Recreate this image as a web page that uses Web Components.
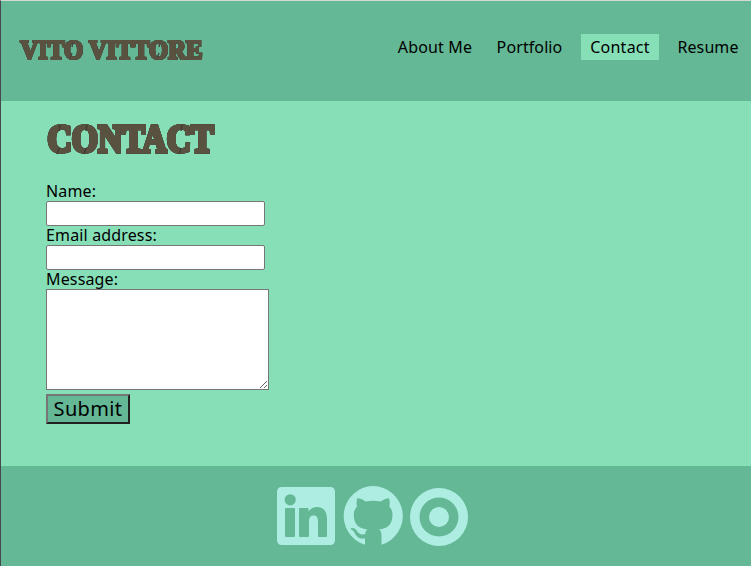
<!DOCTYPE html>
<html lang="en"><head><meta charset="utf-8"><title>Vito Vittore</title>
<style>body{margin:0;background:#fff;height:569px;overflow:hidden}</style></head><body>
<portfolio-page></portfolio-page>
<script>
const define=(name,html,setup)=>customElements.define(name,class extends HTMLElement{
  connectedCallback(){ if(this.shadowRoot)return;
    const r=this.attachShadow({mode:'open'}); r.innerHTML=html; if(setup)setup(this,r); }
});
define('stencil-title',`<style>:host{display:block}svg{display:block;overflow:visible}
text{font-family:"Liberation Serif",serif;font-weight:700;fill:#5a5240;stroke:#5a5240;filter:drop-shadow(.5px .6px 0 #4b443b) drop-shadow(.5px .7px 0 #413b34)}
path{fill:none;stroke-width:1.4}</style><svg><text></text><path/></svg>`,(h,r)=>{
  const a=n=>h.getAttribute(n),s=r.querySelector('svg'),t=r.querySelector('text'),p=r.querySelector('path');
  s.setAttribute('width',a('w'));s.setAttribute('height',a('h'));
  t.textContent=a('text');t.setAttribute('x',1.5);t.setAttribute('y',a('base'));t.setAttribute('font-size',a('size'));
  t.setAttribute('stroke-width',a('weight'));
  t.setAttribute('textLength',a('w')-4);t.setAttribute('lengthAdjust','spacingAndGlyphs');
  p.setAttribute('d',a('cuts'));p.setAttribute('stroke',a('cut-color'));
});
define('nav-link',`<style>:host{display:block;box-sizing:border-box;height:26px;text-align:center;line-height:26px;white-space:nowrap}
:host([active]){background:#87dfb7}a{color:inherit;text-decoration:none}</style><a><slot></slot></a>`);
define('site-header',`<style>:host{display:flex;justify-content:space-between;box-sizing:border-box;height:100px;background:#64b896;padding:33px 0 0 18px}
stencil-title{margin-top:4px}nav{display:flex;gap:6px}
nav-link{font-size:16px}</style>
<stencil-title text="VITO VITTORE" w="186" h="24" base="20.5" size="27" weight="2.2" cut-color="#4a4440" cuts="M54 4l-1 5M53 15l-2 5M141 4l-1 5M140 15l-2 5"></stencil-title>
<nav><nav-link style="width:86px;letter-spacing:.15px">About Me</nav-link><nav-link style="width:91px;letter-spacing:.1px">Portfolio</nav-link><nav-link active style="width:78px;letter-spacing:.25px">Contact</nav-link><nav-link style="width:86px;letter-spacing:.1px">Resume</nav-link></nav>`);
define('form-field',`<style>:host{display:block}label{display:block;height:19px;line-height:19px;font-size:16px;letter-spacing:.15px}
input,textarea{display:block;box-sizing:border-box;margin:0;border:1px solid #767676;border-radius:2px;background:#fff;font:16px "Noto Sans",sans-serif}
input{width:219px;height:25px}textarea{width:223px;height:101px;border-radius:0}</style><label for="f"><slot></slot></label>`,(h,r)=>{
  const e=document.createElement(h.hasAttribute('multiline')?'textarea':'input');e.id='f';r.append(e);
});
define('contact-form',`<style>:host{display:block;box-sizing:border-box;height:365px;background:#87dfb7;padding:20px 45px 0}
form{margin-top:24px}button{display:block;box-sizing:border-box;width:84px;height:30px;margin:4px 0 0;padding:0;border:2px solid;border-color:#767676 #212121 #212121 #767676;background:#64b896;color:#000;font:20px/26px "Noto Sans",sans-serif;letter-spacing:.35px}</style>
<stencil-title text="CONTACT" w="170" h="37" base="31" size="40" weight="3.6" cut-color="#403935" cuts="M14 4l-1 6M13 27l-2 6M41 4l-1 6M40 27l-2 6M136 4l-1 6M135 27l-2 6"></stencil-title>
<form><form-field>Name:</form-field><form-field>Email address:</form-field><form-field multiline>Message:</form-field><button type="button">Submit</button></form>`);
define('social-icon',`<style>:host{display:block}svg{display:block;fill:#aeeee2}</style><svg fill-rule="evenodd"><path/></svg>`,(h,r)=>{
  const s=r.querySelector('svg'),v=h.getAttribute('size').split(' ');
  s.setAttribute('width',v[0]);s.setAttribute('height',v[1]);s.setAttribute('viewBox',`0 0 ${v[0]} ${v[1]}`);
  r.querySelector('path').setAttribute('d',h.getAttribute('shape'));
});
define('site-footer',`<style>:host{display:flex;box-sizing:border-box;height:100px;padding:20px 0 0 276px;background:#64b896;gap:7.5px}</style>
<social-icon style="margin-top:1px" size="58 58" shape="M5 0H53Q58 0 58 5V53Q58 58 53 58H5Q0 58 0 53V5Q0 0 5 0ZM13.2 7.2a5.6 5.6 0 1 0 0 11.2a5.6 5.6 0 1 0 0-11.2ZM8 22Q8 21 9 21H17Q18 21 18 22V49Q18 50 17 50H9Q8 50 8 49ZM22 22Q22 21 23 21H30.5Q31.5 21 31.5 22V24.5C33.5 21.5 36.5 20 40 20C47 20 50 25 50 32V49Q50 50 49 50H42Q41 50 41 49V35C41 31 40 28.5 36.8 28.5C33 28.5 32 31 32 35V49Q32 50 31 50H23Q22 50 22 49Z"></social-icon>
<social-icon size="60 60" shape="M30 0a30 30 0 0 1 8.5 58.7V49C38.5 46 37.5 44.5 36 43.5C44 42.5 49.5 39.5 49.5 28.5C49.5 25 48.3 22.6 46.3 20.5C47 17.5 47 15 46 12.3C43 12.3 40.5 13.6 37.8 15.5C32.8 14.5 27.5 14.5 22.5 15.5C19.5 13.5 17 12.3 14.3 12.3C13.3 15 13.3 17.5 14 20.5C12 22.6 10.8 25 10.8 28.5C10.8 39.5 16.5 42.5 24.5 43.5C23 44.5 22.3 46 22.2 48C18.5 49 15.8 48 14 45C12 42 10 41.8 8 42.2C7.3 43 8.5 43.6 9.5 44.3C12.5 47 12 50.3 17 52.2C18.5 52.7 20 52.7 22 52.3V58.7A30 30 0 0 1 30 0Z"></social-icon>
<social-icon style="margin-top:1.5px" size="58 58" shape="M29 0a29 29 0 1 0 0 58a29 29 0 1 0 0-58ZM29 9.5a19.5 19.5 0 1 1 0 39a19.5 19.5 0 1 1 0-39ZM29 19a10 10 0 1 0 0 20a10 10 0 1 0 0-20Z"></social-icon>`);
define('portfolio-page',`<style>:host{display:block;box-sizing:border-box;width:751px;height:566px;border-top:1px solid #d3d9d7;border-left:1px solid #45494d;font-family:"Noto Sans",sans-serif;color:#000}</style><site-header></site-header><contact-form></contact-form><site-footer></site-footer>`);
</script></body></html>
